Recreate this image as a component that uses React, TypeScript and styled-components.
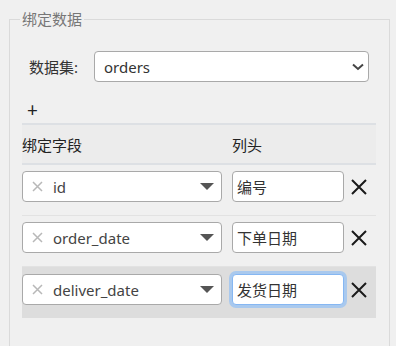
import React, { useEffect, useRef } from "react";
import styled, { createGlobalStyle, css } from "styled-components";

const GlobalStyle = createGlobalStyle`
  html, body {
    margin: 0;
    padding: 0;
    background: #f0f0f0;
    font-family: "Noto Sans", "Noto Sans CJK SC", sans-serif;
    color: #222;
  }
`;

const Page = styled.div`
  width: 396px;
  height: 346px;
  overflow: hidden;
  padding: 10px 6px 0 9px;
  box-sizing: border-box;
`;

const Fieldset = styled.fieldset`
  margin: 0;
  padding: 0 13px 0 12px;
  border: 1px solid #dadada;
  min-height: 360px;
`;

const Legend = styled.legend`
  font-size: 15px;
  line-height: 19px;
  color: #777;
  padding: 0 2px;
  margin-left: -2px;
`;

const FormRow = styled.div`
  display: flex;
  align-items: center;
  margin-top: 22px;
  padding: 0 7px;
`;

const Label = styled.label`
  width: 65px;
  flex: none;
  font-size: 15px;
  color: #333;
`;

const BoxBase = css`
  box-sizing: border-box;
  height: 31px;
  border: 1px solid #a9a9a9;
  border-radius: 4px;
  background: #fff;
  font-family: "Noto Sans", "Noto Sans CJK SC", sans-serif;
  font-size: 15px;
  color: #333;
`;

const Select = styled.div`
  ${BoxBase}
  flex: 1;
  display: flex;
  align-items: center;
  justify-content: space-between;
  padding: 0 4px 0 9px;
`;

const AddButton = styled.div`
  height: 41px;
  display: flex;
  align-items: center;
  padding: 14px 0 0 5px;
  box-sizing: border-box;
  font-size: 19px;
  color: #222;
`;

const Grid = styled.div`
  display: grid;
  grid-template-columns: 210px 118px 1fr;
`;

const HeadCell = styled.div`
  height: 38px;
  display: flex;
  align-items: center;
  background: #ececec;
  border-top: 2px solid #dde0e4;
  border-bottom: 2px solid #dde0e4;
  font-size: 15px;
  color: #222;
`;

const Row = styled.div<{ $active?: boolean }>`
  grid-column: 1 / -1;
  display: grid;
  grid-template-columns: subgrid;
  align-items: start;
  height: ${(p) => (p.$active ? 51 : 51)}px;
  box-sizing: border-box;
  padding-top: ${(p) => (p.$active ? 7 : 6)}px;
  background: ${(p) => (p.$active ? "#dddddd" : "transparent")};
  border-bottom: 1px solid ${(p) => (p.$active ? "#dddddd" : "#e2e2e2")};
`;

const FieldSelect = styled.div`
  ${BoxBase}
  width: 200px;
  display: flex;
  align-items: center;
  padding: 0 7px 0 9px;
`;

const FieldValue = styled.span`
  flex: 1;
  margin-left: 10px;
  color: #444;
`;

const TextInput = styled.input<{ $focused?: boolean }>`
  ${BoxBase}
  width: 112px;
  padding: 0 4px;
  color: #333;
  outline: none;
  ${(p) =>
    p.$focused &&
    css`
      border-color: #86b7f2;
      box-shadow: 0 0 0 3px #a9c9ee;
    `}
`;

const DeleteButton = styled.div`
  height: 31px;
  display: flex;
  align-items: center;
`;

const ClearIcon = () => (
  <svg width="11" height="11" viewBox="0 0 11 11">
    <path d="M1 1L10 10M10 1L1 10" stroke="#b8b8b8" strokeWidth="1.5" />
  </svg>
);

const Caret = () => (
  <svg width="14" height="7" viewBox="0 0 14 7">
    <path d="M0 0H14L7 7Z" fill="#555" />
  </svg>
);

const Chevron = () => (
  <svg width="12" height="8" viewBox="0 0 12 8">
    <path d="M1 1.5L6 6L11 1.5" stroke="#444" strokeWidth="2" fill="none" />
  </svg>
);

const XIcon = () => (
  <svg width="18" height="18" viewBox="0 0 18 18">
    <path d="M2 2L16 16M16 2L2 16" stroke="#1a1a1a" strokeWidth="2" />
  </svg>
);

const rows = [
  { field: "id", title: "编号" },
  { field: "order_date", title: "下单日期" },
  { field: "deliver_date", title: "发货日期" },
];

export default function App() {
  const inputRef = useRef<HTMLInputElement>(null);

  useEffect(() => {
    const el = inputRef.current;
    if (el) {
      el.focus();
      el.setSelectionRange(el.value.length, el.value.length);
    }
  }, []);

  return (
    <>
      <GlobalStyle />
      <Page>
        <Fieldset>
          <Legend>绑定数据</Legend>
          <FormRow>
            <Label>数据集:</Label>
            <Select>
              <span>orders</span>
              <Chevron />
            </Select>
          </FormRow>
          <AddButton>+</AddButton>
          <Grid>
            <HeadCell>绑定字段</HeadCell>
            <HeadCell>列头</HeadCell>
            <HeadCell />
            {rows.map((r, i) => {
              const active = i === rows.length - 1;
              return (
                <Row key={r.field} $active={active}>
                  <FieldSelect>
                    <ClearIcon />
                    <FieldValue>{r.field}</FieldValue>
                    <Caret />
                  </FieldSelect>
                  <TextInput
                    ref={active ? inputRef : undefined}
                    defaultValue={r.title}
                    $focused={active}
                  />
                  <DeleteButton>
                    <XIcon />
                  </DeleteButton>
                </Row>
              );
            })}
          </Grid>
        </Fieldset>
      </Page>
    </>
  );
}
